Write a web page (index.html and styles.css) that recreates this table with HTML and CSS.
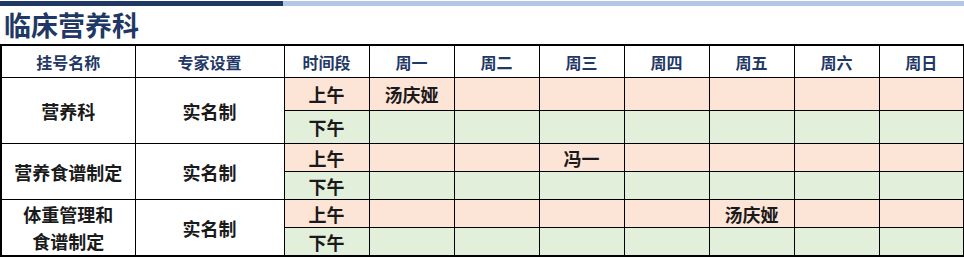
FILE: index.html
```html
<!DOCTYPE html>
<html lang="zh">
<head>
<meta charset="utf-8">
<link rel="stylesheet" href="styles.css">
</head>
<body>
<div class="topbar"><div class="bar-dark"></div><div class="bar-light"></div></div>
<h1 class="title">临床营养科</h1>
<table class="sched">
<colgroup>
<col class="c-name"><col class="c-set"><col class="c-time">
<col class="c-day"><col class="c-day"><col class="c-day"><col class="c-day"><col class="c-day"><col class="c-day"><col class="c-day">
</colgroup>
<thead>
<tr class="head"><th>挂号名称</th><th>专家设置</th><th>时间段</th><th>周一</th><th>周二</th><th>周三</th><th>周四</th><th>周五</th><th>周六</th><th>周日</th></tr>
</thead>
<tbody>
<tr class="am tall"><td rowspan="2" class="plain">营养科</td><td rowspan="2" class="plain">实名制</td><td>上午</td><td>汤庆娅</td><td></td><td></td><td></td><td></td><td></td><td></td></tr>
<tr class="pm tall"><td>下午</td><td></td><td></td><td></td><td></td><td></td><td></td><td></td></tr>
<tr class="am"><td rowspan="2" class="plain">营养食谱制定</td><td rowspan="2" class="plain">实名制</td><td>上午</td><td></td><td></td><td>冯一</td><td></td><td></td><td></td><td></td></tr>
<tr class="pm"><td>下午</td><td></td><td></td><td></td><td></td><td></td><td></td><td></td></tr>
<tr class="am"><td rowspan="2" class="plain two">体重管理和<br>食谱制定</td><td rowspan="2" class="plain">实名制</td><td>上午</td><td></td><td></td><td></td><td></td><td>汤庆娅</td><td></td><td></td></tr>
<tr class="pm"><td>下午</td><td></td><td></td><td></td><td></td><td></td><td></td><td></td></tr>
</tbody>
</table>
</body>
</html>
```
FILE: styles.css
```css
html, body {
  margin: 0;
  padding: 0;
  background: #ffffff;
}
body {
  font-family: "Noto Sans CJK SC", "Microsoft YaHei", sans-serif;
  width: 964px;
}
.topbar {
  display: flex;
  margin-top: 1px;
  height: 5px;
}
.bar-dark {
  width: 283px;
  background: #203864;
}
.bar-light {
  flex: 1;
  background: #b4c7e7;
}
.title {
  margin: 0;
  padding-left: 4px;
  height: 38px;
  line-height: 38px;
  font-size: 27px;
  font-weight: 700;
  color: #1f3864;
}
.sched {
  border-collapse: collapse;
  table-layout: fixed;
  width: 963px;
  border: 2px solid #000;
}
.c-name { width: 134px; }
.c-set { width: 149px; }
.c-time { width: 85px; }
.c-day { width: 85px; }
.sched th, .sched td {
  border: 1px solid #000;
  padding: 0;
  text-align: center;
  vertical-align: middle;
  font-weight: 700;
  overflow: hidden;
  white-space: nowrap;
}
.sched th {
  font-size: 16px;
  color: #1f3864;
  height: 31px;
  line-height: 20px;
  background: #fff;
}
.sched td {
  font-size: 18px;
  color: #1a1a1a;
  line-height: 20px;
}
.sched tr.am td { background: #fce4d6; height: 27px; }
.sched tr.pm td { background: #e2efda; height: 27px; }
.sched tr.tall td { height: 32px; }
.sched td.plain { background: #ffffff !important; }
.sched td.two { line-height: 27px; }
```
